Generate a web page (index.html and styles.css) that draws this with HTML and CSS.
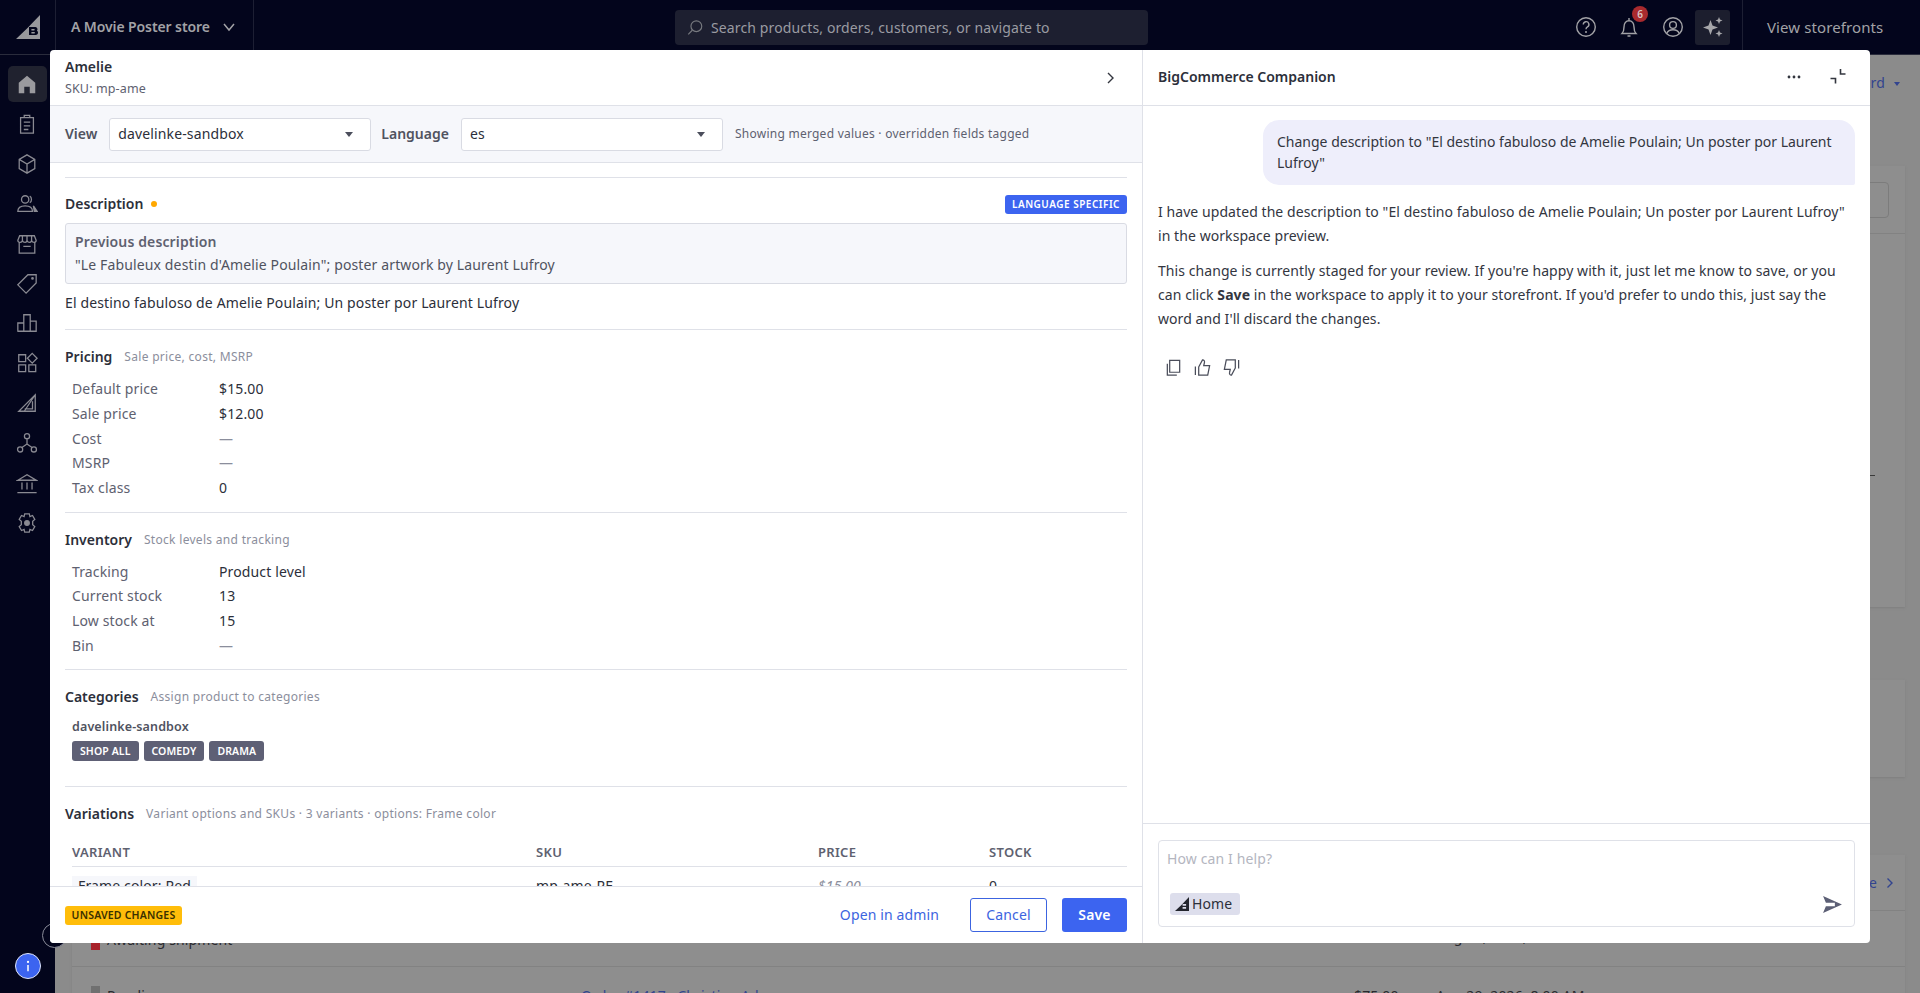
FILE: index.html
```html
<!DOCTYPE html>
<html lang="en">
<head>
<meta charset="utf-8">
<title>A Movie Poster store</title>
<link rel="stylesheet" href="styles.css">
</head>
<body>
<div class="app">
  <header class="topbar">
    <div class="logo-cell">
      <svg class="bc-logo" viewBox="0 0 24 24"><path fill="#98989c" d="M24 0V24H0L11 13.5Z"/><path fill="#03051c" d="M13 12h6.5a2.2 2.2 0 0 1 1.4 3.7 2.3 2.3 0 0 1-1.2 4.3H13ZM15.4 14v1.5h2.6a.75.75 0 0 0 0-1.5ZM15.4 17v1.5h2.8a.75.75 0 0 0 0-1.5Z"/></svg>
    </div>
    <div class="store">
      <span>A Movie Poster store</span>
      <svg class="store-chev" viewBox="0 0 14 14"><path d="M2 4l5 6 5-6" fill="none" stroke="#a2a2a6" stroke-width="1.5"/></svg>
    </div>
    <div class="search">
      <svg class="search-ic" viewBox="0 0 20 20"><circle cx="11.5" cy="8" r="6" fill="none" stroke="#77797f" stroke-width="1.3"/><path d="M7 12.5L2.5 17" stroke="#77797f" stroke-width="1.3"/></svg>
      <span>Search products, orders, customers, or navigate to</span>
    </div>
    <div class="top-icons">
      <svg class="tic" viewBox="0 0 24 24"><circle cx="12" cy="12" r="9.3" fill="none" stroke="#a2a2a6" stroke-width="1.4"/><path d="M9.3 9.5a2.8 2.8 0 1 1 4.2 2.4c-1 .6-1.5 1.2-1.5 2.3" fill="none" stroke="#a2a2a6" stroke-width="1.4"/><circle cx="12" cy="17" r="1" fill="#a2a2a6"/></svg>
      <span class="bell">
        <svg class="tic" viewBox="0 0 24 24"><path d="M5 18.5c1.5-1.5 2-3 2-6.5 0-3.500 2-6.300 5-6.300s5 2.800 5 6.300c0 3.500.5 5 2 6.500ZM12 3v2.500M10.500 21h3" fill="none" stroke="#a2a2a6" stroke-width="1.4"/></svg>
        <b class="badge">6</b>
      </span>
      <svg class="tic" viewBox="0 0 24 24"><circle cx="12" cy="12" r="9.300" fill="none" stroke="#a2a2a6" stroke-width="1.4"/><circle cx="12" cy="10" r="3.400" fill="none" stroke="#a2a2a6" stroke-width="1.4"/><path d="M5.800 18.500c1-2.500 3.300-3.700 6.200-3.700s5.200 1.200 6.200 3.700" fill="none" stroke="#a2a2a6" stroke-width="1.4"/></svg>
      <span class="ai-btn">
        <svg class="tic" viewBox="0 0 24 24"><path fill="#a6a6aa" d="M9.500 5l2 5.500 5.500 2-5.500 2-2 5.500-2-5.500-5.500-2 5.500-2ZM18 2l1 2.500 2.500 1-2.500 1-1 2.500-1-2.500-2.500-1 2.500-1ZM18 15l1 2.500 2.500 1-2.500 1-1 2.500-1-2.500-2.500-1 2.500-1Z"/></svg>
      </span>
    </div>
    <div class="view-store">View storefronts</div>
  </header>

  <div class="body">
    <nav class="sidebar">
      <span class="nav-item active"><svg viewBox="0 0 24 24"><path fill="#9a9a9e" d="M12 3l9 7.500V22h-6v-7H9v7H3V10.500Z"/></svg></span>
      <span class="nav-item"><svg viewBox="0 0 24 24"><path d="M5 5h14v17H5ZM9 5V2.500h6V5M8.500 10h7M8.500 14h7M8.500 18h5" /></svg></span>
      <span class="nav-item"><svg viewBox="0 0 24 24"><path d="M12 2l8.500 5v10L12 22l-8.500-5V7ZM3.500 7l8.500 5 8.500-5M12 12v10" /></svg></span>
      <span class="nav-item"><svg viewBox="0 0 24 24"><circle cx="10" cy="7" r="4"/><path d="M2 20c0-4 3-6 8-6s8 2 8 6ZM15 3.500c2.500 1 2.500 6 0 7"/><path fill="#8a8a92" d="M19 14l4 6h-3Z"/></svg></span>
      <span class="nav-item"><svg viewBox="0 0 24 24"><path d="M3.500 10v12h17V10M2 8l2-5h16l2 5c0 3-4 3-5 0 0 3-4 3-5 0 0 3-4 3-5 0 0 3-5 3-5 0ZM7 3v5M12 3v5M17 3v5M8 14.500h8" /></svg></span>
      <span class="nav-item"><svg viewBox="0 0 24 24"><path d="M13 3h9v9L11 23 2 14Z"/><circle cx="18" cy="7" r=".8"/></svg></span>
      <span class="nav-item"><svg viewBox="0 0 24 24"><path d="M2 21V12h6.500V21M8.500 21V3h7v18M15.500 21V10H22v11ZM1.500 21h21" /></svg></span>
      <span class="nav-item"><svg viewBox="0 0 24 24"><path d="M3 3h7.500v7.500H3ZM3 14h7.500v7.500H3ZM14 14h7.500v7.500H14ZM17.700 1.500l5.300 5.300-5.300 5.300-5.300-5.300Z"/></svg></span>
      <span class="nav-item"><svg viewBox="0 0 24 24"><path d="M21 3v18H3ZM18 10v8.500h-8.500M21 3L9 21"/></svg></span>
      <span class="nav-item"><svg viewBox="0 0 24 24"><circle cx="12" cy="4.500" r="2.800"/><circle cx="4.500" cy="19" r="2.800"/><circle cx="19.500" cy="19" r="2.800"/><path d="M12 7.500V13L6.500 17M12 13l5.500 4"/></svg></span>
      <span class="nav-item"><svg viewBox="0 0 24 24"><path d="M2 9l10-6 10 6ZM6.500 11.500V19M12 11.500V19M17.500 11.500V19M1.500 22.500h21"/></svg></span>
      <span class="nav-item"><svg viewBox="0 0 24 24"><path d="M9.500 2h5l.7 3 2.800-1.200 2.500 4.300-2.300 2 0 3.800 2.300 2-2.500 4.300-2.800-1.200-.7 3h-5l-.7-3-2.800 1.200-2.500-4.300 2.300-2 0-3.800-2.300-2 2.500-4.300 2.800 1.200Z"/><circle cx="12" cy="12" r="2.500" fill="#8a8a92"/></svg></span>
      <span class="info-btn"><svg viewBox="0 0 24 24"><circle cx="12" cy="6.500" r="1.500" fill="#fff"/><path d="M12 10.500V19" stroke="#fff" stroke-width="2"/></svg></span>
    </nav>

    <main class="page">
      <div class="page-head"><span class="page-link">Customize dashboard</span><i class="caret"></i></div>
      <section class="bg-card card-a">
        <div class="card-a-head"><div class="bg-input"></div></div>
        <div class="tick"></div>
      </section>
      <section class="bg-card card-b"></section>
      <section class="bg-card card-c">
        <div class="card-c-head"><span class="page-link">View more</span><svg class="more-chev" viewBox="0 0 8 12"><path d="M1.500 1.500L6 6l-4.500 4.500" fill="none" stroke="#32448f" stroke-width="1.400"/></svg></div>
        <div class="order-row row-one">
          <span class="order-status"><i class="sq sq-red"></i>Awaiting shipment</span>
          <span></span>
          <span class="raised">$62.00</span>
          <span class="raised">Aug 29, 2026, 9:00 AM</span>
        </div>
        <div class="order-row row-two">
          <span class="order-status"><i class="sq sq-gray"></i>Pending</span>
          <span class="page-link">Order #1417 · Christina Adams</span>
          <span>$75.00</span>
          <span>Aug 29, 2026, 8:00 AM</span>
        </div>
      </section>
    </main>
  </div>

  <div class="collapse-dot"></div>

  <div class="modal">
    <div class="pane-left">
      <div class="head">
        <div>
          <div class="title">Amelie</div>
          <div class="sku">SKU: mp-ame</div>
        </div>
        <svg class="head-chev" viewBox="0 0 10 14"><path d="M2 2l5 5-5 5" fill="none" stroke="#33363f" stroke-width="1.400"/></svg>
      </div>
      <div class="toolbar">
        <span class="tb-label">View</span>
        <div class="select sel-view"><span>davelinke-sandbox</span><i class="sel-caret"></i></div>
        <span class="tb-label">Language</span>
        <div class="select sel-lang"><span>es</span><i class="sel-caret"></i></div>
        <span class="tb-note">Showing merged values · overridden fields tagged</span>
      </div>
      <div class="scroll">
        <div class="first-rule"></div>
        <section class="sec sec-desc">
          <div class="sec-head">
            <h3>Description</h3><i class="dot"></i>
            <span class="lang-badge">LANGUAGE SPECIFIC</span>
          </div>
          <div class="prev">
            <div class="prev-title">Previous description</div>
            <div class="prev-text">"Le Fabuleux destin d'Amelie Poulain"; poster artwork by Laurent Lufroy</div>
          </div>
          <p class="desc-text">El destino fabuloso de Amelie Poulain; Un poster por Laurent Lufroy</p>
        </section>
        <section class="sec">
          <div class="sec-head"><h3>Pricing</h3><span class="sub">Sale price, cost, MSRP</span></div>
          <dl class="kv">
            <dt>Default price</dt><dd>$15.00</dd>
            <dt>Sale price</dt><dd>$12.00</dd>
            <dt>Cost</dt><dd class="nil">—</dd>
            <dt>MSRP</dt><dd class="nil">—</dd>
            <dt>Tax class</dt><dd>0</dd>
          </dl>
        </section>
        <section class="sec">
          <div class="sec-head"><h3>Inventory</h3><span class="sub">Stock levels and tracking</span></div>
          <dl class="kv">
            <dt>Tracking</dt><dd>Product level</dd>
            <dt>Current stock</dt><dd>13</dd>
            <dt>Low stock at</dt><dd>15</dd>
            <dt>Bin</dt><dd class="nil">—</dd>
          </dl>
        </section>
        <section class="sec sec-cat">
          <div class="sec-head"><h3>Categories</h3><span class="sub">Assign product to categories</span></div>
          <div class="cat-store">davelinke-sandbox</div>
          <div class="tags"><span class="tag">SHOP ALL</span><span class="tag">COMEDY</span><span class="tag">DRAMA</span></div>
        </section>
        <section class="sec sec-var">
          <div class="sec-head"><h3>Variations</h3><span class="sub">Variant options and SKUs · 3 variants · options: Frame color</span></div>
          <div class="vrow vhead"><span>VARIANT</span><span>SKU</span><span>PRICE</span><span>STOCK</span></div>
          <div class="vrow vbody"><span class="vchip">Frame color: Red</span><span>mp-ame-RE</span><span class="vprice">$15.00</span><span>0</span></div>
        </section>
      </div>
      <div class="foot">
        <span class="unsaved">UNSAVED CHANGES</span>
        <span class="link-btn">Open in admin</span>
        <span class="btn btn-ghost">Cancel</span>
        <span class="btn btn-save">Save</span>
      </div>
    </div>

    <aside class="pane-right">
      <div class="head head-r">
        <div class="title">BigCommerce Companion</div>
        <svg class="dots" viewBox="0 0 14 4"><circle cx="2" cy="2" r="1.400" fill="#33363f"/><circle cx="7" cy="2" r="1.400" fill="#33363f"/><circle cx="12" cy="2" r="1.400" fill="#33363f"/></svg>
        <svg class="collapse" viewBox="0 0 16 16"><path d="M10.500 1v5H15.500M.5 10.500h5v5" fill="none" stroke="#33363f" stroke-width="1.600"/></svg>
      </div>
      <div class="chat">
        <div class="bubble">Change description to "El destino fabuloso de Amelie Poulain; Un poster por Laurent Lufroy"</div>
        <p>I have updated the description to "El destino fabuloso de Amelie Poulain; Un poster por Laurent Lufroy" in the workspace preview.</p>
        <p>This change is currently staged for your review. If you're happy with it, just let me know to save, or you can click <b>Save</b> in the workspace to apply it to your storefront. If you'd prefer to undo this, just say the word and I'll discard the changes.</p>
        <div class="actions">
          <svg viewBox="0 0 20 20"><path d="M6 2.500h10.500v12.500H6ZM3.500 6v12h10"/></svg>
          <svg viewBox="0 0 20 20"><path d="M2.500 9v9M6 9.500L10 2c1.800 0 2.500 1.500 2 3l-.7 3H17.500l-2 10H6Z"/></svg>
          <svg viewBox="0 0 20 20"><path d="M17.500 11V2M14 10.500L10 18c-1.800 0-2.500-1.500-2-3l.7-3H2.500l2-10H14Z"/></svg>
        </div>
      </div>
      <div class="composer-wrap">
        <div class="composer">
          <div class="placeholder">How can I help?</div>
          <div class="composer-row">
            <span class="ctx">
              <svg class="ctx-logo" viewBox="0 0 24 24"><path fill="#23252d" d="M24 0V24H0L11 13.500Z"/><path fill="#dcdcea" d="M13 12h6v3h-6ZM13 17h6v3h-6Z"/></svg>Home
            </span>
            <svg class="send" viewBox="0 0 20 18"><path fill="#5c5f75" d="M0 0l20 9L0 18l3-7.200h9.500v-3.600H3Z"/></svg>
          </div>
        </div>
      </div>
    </aside>
  </div>
</div>
</body>
</html>
```

FILE: styles.css
```css
* { box-sizing: border-box; }
html, body { margin: 0; height: 993px; overflow: hidden; }
body { font-family: "Noto Sans", sans-serif; font-size: 14px; letter-spacing: .13px; line-height: 20px; color: #2c2f3a; background: #8b8b8b; }
h3, p, dl, dd { margin: 0; }

.app { position: relative; width: 1920px; height: 993px; }

.topbar { display: flex; align-items: stretch; height: 55px; background: #03051c; border-bottom: 1px solid #2a2c3c; color: #a2a2a6; }
.logo-cell { width: 56px; border-right: 1px solid #1d1f33; display: flex; align-items: center; justify-content: center; }
.bc-logo { width: 24px; height: 24px; margin-left: 1px; }
.store { width: 198px; border-right: 1px solid #1d1f33; display: flex; align-items: center; padding-left: 15px; gap: 12px; font-weight: 600; letter-spacing: -.1px; }
.store-chev { width: 14px; height: 14px; }
.search { margin: 10px 0 9px 421px; width: 473px; background: #1d1f30; border-radius: 4px; display: flex; align-items: center; padding-left: 11px; gap: 7px; color: #9a9ba2; }
.search-ic { width: 18px; height: 18px; }
.top-icons { margin-left: 426px; display: flex; align-items: center; width: 168px; }
.tic { width: 24px; height: 24px; display: block; }
.top-icons > .tic:first-child { margin-right: 19px; }
.bell { position: relative; margin-right: 20px; }
.badge { position: absolute; left: 15px; top: -9px; width: 16px; height: 16px; border-radius: 50%; background: #a82a2e; color: #d8c5c6; font-size: 10px; line-height: 16px; text-align: center; font-weight: 600; letter-spacing: 0; }
.ai-btn { margin-left: 10px; width: 35px; height: 35px; border-radius: 3px; background: #1c1e2e; display: flex; align-items: center; justify-content: center; }
.view-store { flex: 1; border-left: 1px solid #1d1f33; display: flex; align-items: center; padding-left: 24px; font-size: 15px; letter-spacing: .1px; }

.body { display: flex; height: 938px; }
.sidebar { width: 55px; background: #03051c; display: flex; flex-direction: column; align-items: center; padding-top: 11px; flex: none; position: relative; }
.nav-item { width: 39px; height: 36px; margin-bottom: 3.900px; margin-right: 1px; border-radius: 5px; display: flex; align-items: center; justify-content: center; flex: none; }
.nav-item.active { background: #20222f; }
.nav-item svg { width: 22px; height: 22px; fill: none; stroke: #8a8a92; stroke-width: 1.400; }
.nav-item.active svg { stroke: none; }
.info-btn { margin-top: auto; margin-bottom: 14px; width: 26px; height: 26px; border-radius: 50%; background: #3c64f0; border: 1px solid #dfe5fb; display: flex; align-items: center; justify-content: center; }
.info-btn svg { width: 18px; height: 18px; }
.collapse-dot { position: absolute; left: 42px; top: 923px; width: 25px; height: 25px; border-radius: 50%; background: #03051c; border: 1px solid #8a8c99; }

.page { flex: 1; padding: 0 15px 0 17px; min-width: 0; overflow: hidden; background: #8b8b8b; color: #2a2a2e; }
.page-head { height: 111px; display: flex; justify-content: flex-end; align-items: flex-start; padding: 18px 5px 0 0; gap: 9px; }
.page-link { color: #32448f; }
.caret { width: 0; height: 0; margin-top: 9px; border: 3.500px solid transparent; border-top: 4px solid #32448f; border-bottom: 0; }
.bg-card { background: #8e8e8e; box-shadow: 0 1px 2px #7f7f7f; }
.card-a { height: 441px; }
.card-a-head { height: 68px; padding: 16px 16px 0 0; border-bottom: 1px solid #828282; display: flex; justify-content: flex-end; }
.bg-input { width: 300px; height: 36px; border: 1px solid #7c7c7c; border-radius: 4px; }
.tick { width: 40px; height: 1px; background: #3a3a3a; margin: 241px 30px 0 auto; }
.card-b { height: 97px; margin-top: 73px; }
.card-c { height: 200px; margin-top: 78px; }
.card-c-head { height: 56px; border-bottom: 1px solid #828282; display: flex; justify-content: flex-end; align-items: center; gap: 9px; padding: 0 11px 0 0; }
.more-chev { width: 8px; height: 12px; }
.order-row { display: grid; grid-template-columns: 490px 773px 82px 1fr; align-items: center; padding: 0 0 0 19px; height: 56px; border-bottom: 1px solid #828282; }
.row-one { padding-top: 3px; }
.row-two { padding-top: 2px; }
.raised { margin-bottom: 7px; }
.order-status { display: flex; align-items: center; gap: 7px; }
.sq { width: 9px; height: 19px; flex: none; margin-top: 0; }
.sq-red { background: #a8222a; }
.sq-gray { background: #707070; }

.modal { position: absolute; left: 50px; top: 50px; width: 1820px; height: 893px; background: #fff; display: flex; border-radius: 4px; overflow: hidden; }
.pane-left { width: 1093px; flex: none; display: flex; flex-direction: column; border-right: 1px solid #dfe1e8; }
.pane-right { flex: 1; min-width: 0; display: flex; flex-direction: column; }
.head { height: 56px; flex: none; border-bottom: 1px solid #dfe1e8; display: flex; align-items: center; padding: 0 15px; justify-content: space-between; }
.head-chev { width: 10px; height: 14px; margin-right: 11px; }
.title { font-weight: 600; color: #2c2f3a; line-height: 20px; letter-spacing: 0; }
.sku { font-size: 12.500px; line-height: 18px; color: #5e6170; margin-top: 3px; }
.head-r { padding-right: 24px; justify-content: flex-start; padding-bottom: 2px; }
.dots { width: 14px; height: 4px; margin-left: auto; margin-right: 29px; }
.collapse { width: 16px; height: 16px; transform: translateY(-1px); }

.toolbar { height: 57px; flex: none; background: #f6f7fb; border-bottom: 1px solid #dfe1e8; display: flex; align-items: center; padding: 0 15px; }
.tb-label { font-weight: 600; color: #50535f; margin-right: 12px; letter-spacing: 0; }
.select { height: 33px; background: #fff; border: 1px solid #d9dbe3; border-radius: 3px; display: flex; align-items: center; justify-content: space-between; padding: 0 17px 0 8px; color: #2c2f3a; }
.sel-view { width: 262px; margin-right: 10px; }
.sel-lang { width: 262px; }
.sel-caret { width: 0; height: 0; border: 4px solid transparent; border-top: 5px solid #4b4e5c; border-bottom: 0; }
.tb-note { margin-left: 12px; font-size: 12px; letter-spacing: .25px; color: #5e6170; }

.scroll { flex: 1; min-height: 0; overflow: hidden; padding: 14px 15px 0; }
.first-rule { border-top: 1px solid #dfe1e8; }
.sec { padding: 17px 0 11px; border-bottom: 1px solid #dfe1e8; }
.sec-desc { padding: 16px 0; }
.sec-cat { padding-bottom: 25px; }
.sec-var { border-bottom: 0; padding-bottom: 0; }
.sec-head { display: flex; align-items: center; height: 20px; }
.sec-head h3 { font-size: 14px; line-height: 20px; font-weight: 600; color: #2c2f3a; letter-spacing: 0; }
.sub { margin-left: 12px; font-size: 12px; letter-spacing: .3px; color: #8b8e9c; }
.dot { width: 6px; height: 6px; border-radius: 50%; background: #ffa800; margin-left: 8px; }
.lang-badge { margin-left: auto; height: 19px; width: 122px; border-radius: 3px; background: #3c64f0; color: #fff; font-size: 10px; font-weight: 600; letter-spacing: .5px; line-height: 19px; text-align: center; }
.prev { margin-top: 9px; height: 61px; background: #f6f7fb; border: 1px solid #d9dbe3; border-radius: 3px; padding: 7px 9px 0; }
.prev-title { font-weight: 600; color: #5e6170; line-height: 22px; }
.prev-text { color: #50535f; line-height: 24px; }
.desc-text { margin-top: 9px; line-height: 20px; }

.kv { display: grid; grid-template-columns: 147px 1fr; grid-auto-rows: 24.800px; margin: 9.600px 0 0 7px; align-items: center; }
.kv dt { color: #5e6170; }
.kv dd { color: #2c2f3a; }
.kv .nil { color: #8b8e9c; }

.cat-store { margin: 11px 0 0 7px; font-size: 12.500px; line-height: 18px; font-weight: 600; color: #50535f; }
.tags { display: flex; gap: 5px; margin: 5px 0 0 7px; }
.tag { height: 20px; line-height: 20px; padding: 0 8px; background: #5e6075; border-radius: 3px; color: #fff; font-size: 10.500px; font-weight: 600; letter-spacing: .1px; }

.vrow { display: grid; grid-template-columns: 464px 282px 171px 1fr; margin-left: 7px; }
.vhead { margin-top: 18px; height: 25px; line-height: 20px; border-bottom: 1px solid #dfe1e8; font-size: 13px; font-weight: 600; letter-spacing: .3px; color: #5e6170; }
.vbody { padding-top: 9px; }
.vchip { background: #f6f7fb; padding: 0 6px; width: max-content; }
.vprice { font-style: italic; color: #8b8e9c; }

.foot { height: 57px; flex: none; border-top: 1px solid #dfe1e8; background: #fff; display: flex; align-items: center; padding: 0 15px; }
.unsaved { height: 19px; width: 117px; text-align: center; line-height: 19px; background: #ffbd0a; border-radius: 3px; font-size: 10.500px; font-weight: 600; letter-spacing: .2px; color: #3a3000; }
.link-btn { margin-left: auto; margin-right: 31px; color: #3c64e0; }
.btn { height: 34px; border-radius: 3px; display: flex; align-items: center; justify-content: center; }
.btn-ghost { width: 77px; border: 1px solid #3c64e0; color: #3c64e0; margin-right: 15px; }
.btn-save { width: 65px; background: #3c64f0; color: #fff; font-weight: 600; }

.chat { flex: 1; min-height: 0; overflow: hidden; padding: 14px 15px 0; color: #33363f; }
.chat p { line-height: 24px; margin-top: 11px; letter-spacing: .07px; }
.bubble { margin-left: 105px; width: 592px; height: 65px; padding: 11px 14px 0; background: #eeeefb; border-radius: 16px 16px 2px 16px; letter-spacing: 0; line-height: 21px; margin-bottom: 15px; }
.actions { display: flex; gap: 10px; margin: 27px 0 0 6px; }
.actions svg { width: 19px; height: 19px; fill: none; stroke: #4a4d5a; stroke-width: 1.300; }
.composer-wrap { height: 120px; flex: none; border-top: 1px solid #dfe1e8; padding: 16px 15px 0 15px; }
.composer { height: 87px; border: 1px solid #dfe1e8; border-radius: 4px; padding: 8px 12px 0 8px; }
.placeholder { color: #b4b6bf; line-height: 20px; }
.composer-row { display: flex; justify-content: space-between; align-items: center; margin-top: 24px; padding-left: 3px; }
.ctx { height: 22px; width: 70px; background: #dddeec; border-radius: 3px; display: flex; align-items: center; gap: 3px; padding-left: 5px; color: #2c2f3a; }
.ctx-logo { width: 14px; height: 14px; }
.send { width: 19px; height: 17px; }
```
